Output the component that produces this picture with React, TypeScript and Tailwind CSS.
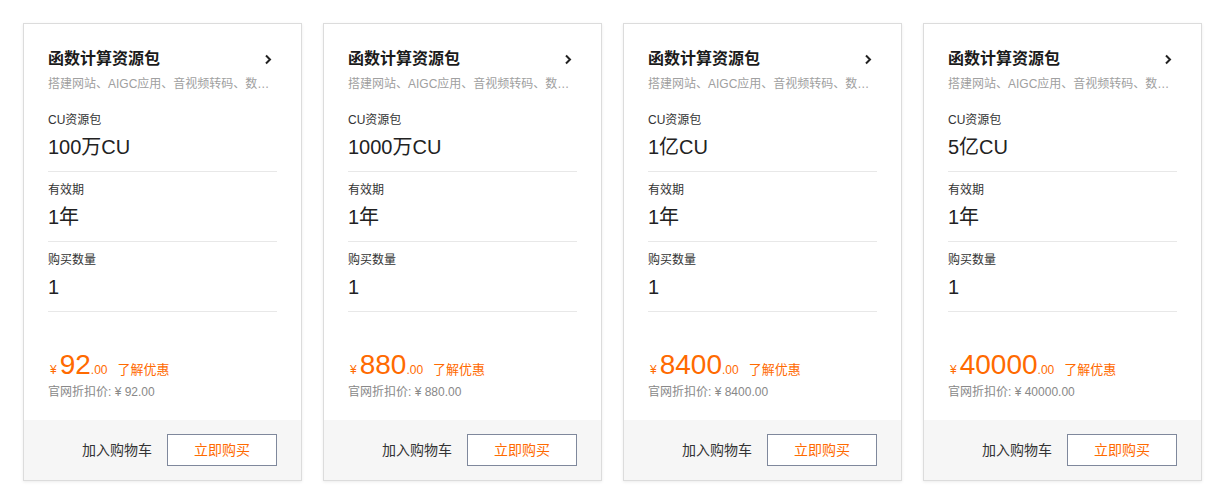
const cards = [
  { cu: '100万CU', price: '92', full: '92.00' },
  { cu: '1000万CU', price: '880', full: '880.00' },
  { cu: '1亿CU', price: '8400', full: '8400.00' },
  { cu: '5亿CU', price: '40000', full: '40000.00' },
]

function Field({ label, value }: { label: string; value: string }) {
  return (
    <div className="pt-[9px] pb-[10px] border-b border-[#e8e8e8]">
      <div className="text-xs leading-[18px] text-[#333]">{label}</div>
      <div className="mt-[4px] text-[20px] leading-7 text-[#222]">{value}</div>
    </div>
  )
}

function Card({ cu, price, full }: { cu: string; price: string; full: string }) {
  return (
    <div className="w-[279px] shrink-0 bg-white border border-[#dcdcdc] shadow-[0_1px_3px_rgba(0,0,0,0.08)]">
      <div className="px-6 pt-[23px] h-[396px]">
        <div className="flex items-center justify-between h-6">
          <span className="text-base font-bold text-[#1a1a1a]">函数计算资源包</span>
          <svg width="8" height="11" viewBox="0 0 8 11" className="mr-[5px]">
            <polyline points="2,1.5 6,5.5 2,9.5" fill="none" stroke="#222" strokeWidth="2" />
          </svg>
        </div>
        <div className="mt-[4px] text-xs leading-[18px] text-[#a0a0a0] truncate">
          搭建网站、AIGC应用、音视频转码、数据处理等场景
        </div>
        <div className="mt-[9px]">
          <Field label="CU资源包" value={cu} />
          <Field label="有效期" value="1年" />
          <Field label="购买数量" value="1" />
        </div>
        <div className="mt-[39px] flex items-baseline text-[#ff6a00] h-7">
          <span className="text-xs ml-[2px] mr-[3px]">¥</span>
          <span className="text-[28px] leading-7">{price}</span>
          <span className="text-xs">.00</span>
          <span className="ml-[10px] text-[13px]">了解优惠</span>
        </div>
        <div className="mt-[4px] text-xs leading-[18px] text-[#888]">官网折扣价: ¥ {full}</div>
      </div>
      <div className="h-[60px] bg-[#f6f6f6] flex items-center justify-end gap-[15px] px-6">
        <span className="text-sm text-[#333]">加入购物车</span>
        <button className="w-[110px] h-8 border border-[#7f889c] bg-white text-sm text-[#ff6a00]">立即购买</button>
      </div>
    </div>
  )
}

export default function App() {
  return (
    <div
      className="w-[1225px] h-[503px] bg-white flex items-start gap-[21px] pl-[23px] pt-[23px]"
      style={{ fontFamily: '"Liberation Sans", "Noto Sans CJK SC", sans-serif' }}
    >
      {cards.map((c) => (
        <Card key={c.cu} {...c} />
      ))}
    </div>
  )
}
